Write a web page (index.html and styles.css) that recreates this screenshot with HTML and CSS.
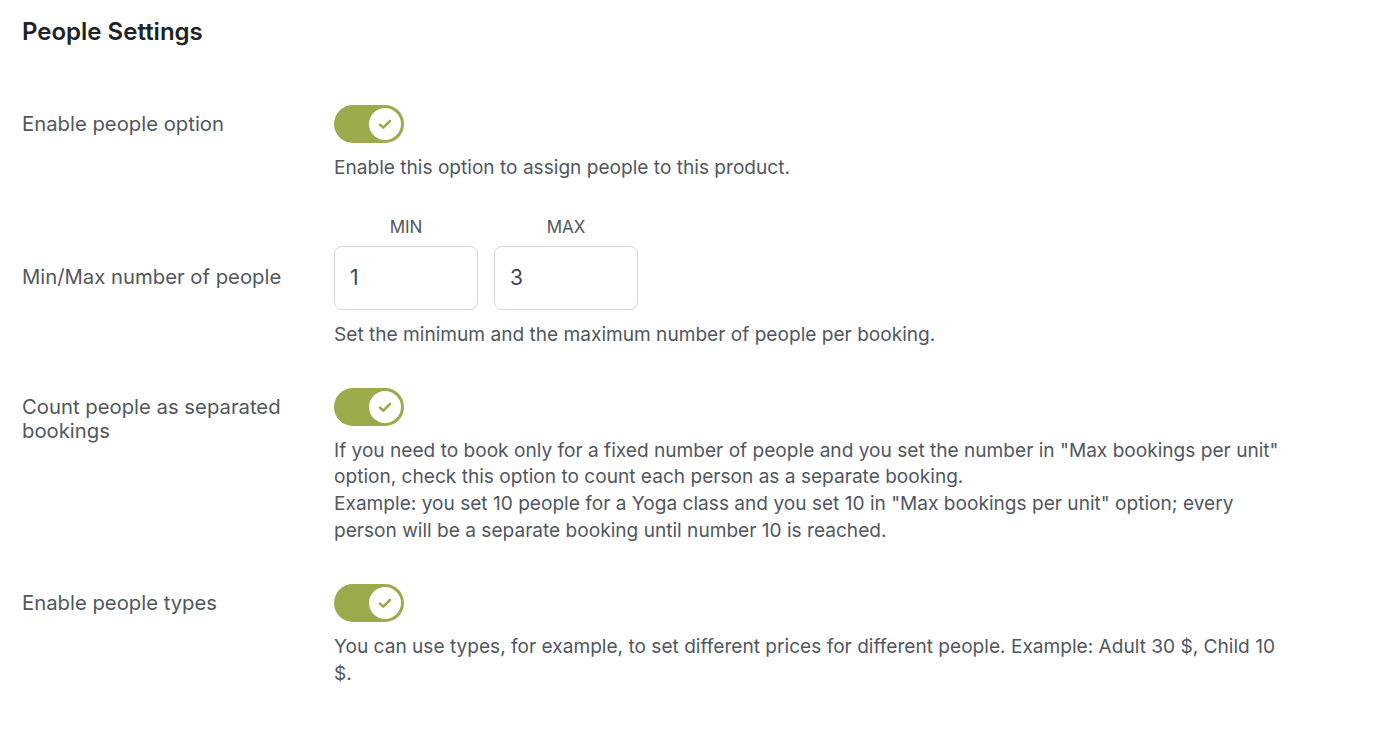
FILE: index.html
```html
<!DOCTYPE html>
<html>
<head>
<meta charset="utf-8">
<link rel="stylesheet" href="styles.css">
</head>
<body>
<div class="panel">
  <h2 class="title">People Settings</h2>
  <div class="rows">
    <div class="row">
      <div class="label">Enable people option</div>
      <div class="field">
        <span class="toggle"><span class="knob"><svg viewBox="0 0 16 16" width="16" height="16"><path d="M3 8.6 L6.3 11.6 L13 5" fill="none" stroke="#9aa94b" stroke-width="2.6" stroke-linecap="round" stroke-linejoin="round"/></svg></span></span>
        <p class="desc">Enable this option to assign people to this product.</p>
      </div>
    </div>
    <div class="row row-minmax">
      <div class="label label-minmax">Min/Max number of people</div>
      <div class="field">
        <div class="minmax">
          <div class="mm">
            <div class="mm-head">MIN</div>
            <div class="mm-input">1</div>
          </div>
          <div class="mm">
            <div class="mm-head">MAX</div>
            <div class="mm-input">3</div>
          </div>
        </div>
        <p class="desc">Set the minimum and the maximum number of people per booking.</p>
      </div>
    </div>
    <div class="row">
      <div class="label">Count people as separated bookings</div>
      <div class="field">
        <span class="toggle"><span class="knob"><svg viewBox="0 0 16 16" width="16" height="16"><path d="M3 8.6 L6.3 11.6 L13 5" fill="none" stroke="#9aa94b" stroke-width="2.6" stroke-linecap="round" stroke-linejoin="round"/></svg></span></span>
        <p class="desc">If you need to book only for a fixed number of people and you set the number in "Max bookings per unit" option, check this option to count each person as a separate booking.<br>Example: you set 10 people for a Yoga class and you set 10 in "Max bookings per unit" option; every person will be a separate booking until number 10 is reached.</p>
      </div>
    </div>
    <div class="row">
      <div class="label">Enable people types</div>
      <div class="field">
        <span class="toggle"><span class="knob"><svg viewBox="0 0 16 16" width="16" height="16"><path d="M3 8.6 L6.3 11.6 L13 5" fill="none" stroke="#9aa94b" stroke-width="2.6" stroke-linecap="round" stroke-linejoin="round"/></svg></span></span>
        <p class="desc">You can use types, for example, to set different prices for different people. Example: Adult 30 $, Child 10 $.</p>
      </div>
    </div>
  </div>
</div>
</body>
</html>
```

FILE: styles.css
```css
html, body {
  margin: 0;
  padding: 0;
  background: #ffffff;
}
body {
  font-family: Inter, "Liberation Sans", sans-serif;
  color: #50575e;
}
.panel {
  padding: 16px 22px 0 22px;
}
.title {
  margin: 0;
  font-size: 24px;
  line-height: 32px;
  font-weight: 600;
  color: #1d2327;
}
.rows {
  display: flex;
  flex-direction: column;
  gap: 40px;
  margin-top: 57px;
}
.row {
  display: flex;
}
.row-minmax {
  margin-top: -4px;
}
.label {
  width: 312px;
  flex: none;
  box-sizing: border-box;
  padding-top: 7px;
  padding-right: 20px;
  font-size: 20.3px;
  line-height: 24px;
}
.label-minmax {
  padding-top: 48px;
}
.field {
  flex: 1;
  max-width: 950px;
}
.toggle {
  display: flex;
  justify-content: flex-end;
  align-items: center;
  width: 70px;
  height: 38px;
  box-sizing: border-box;
  padding: 3px;
  border-radius: 19px;
  background: #9caa4b;
}
.knob {
  width: 32px;
  height: 32px;
  border-radius: 50%;
  background: #ffffff;
  display: flex;
  align-items: center;
  justify-content: center;
}
.desc {
  margin: 11px 0 0 0;
  font-size: 19.1px;
  line-height: 26.8px;
}
.minmax {
  display: flex;
  gap: 16px;
}
.mm {
  width: 144px;
}
.mm-head {
  text-align: center;
  font-size: 17px;
  line-height: 20px;
  margin-bottom: 9px;
  color: #50575e;
}
.mm-input {
  box-sizing: border-box;
  height: 64px;
  border: 1px solid #d2d8e0;
  border-radius: 8px;
  padding: 0 15px;
  display: flex;
  align-items: center;
  font-size: 21px;
  color: #3b4758;
}
```
